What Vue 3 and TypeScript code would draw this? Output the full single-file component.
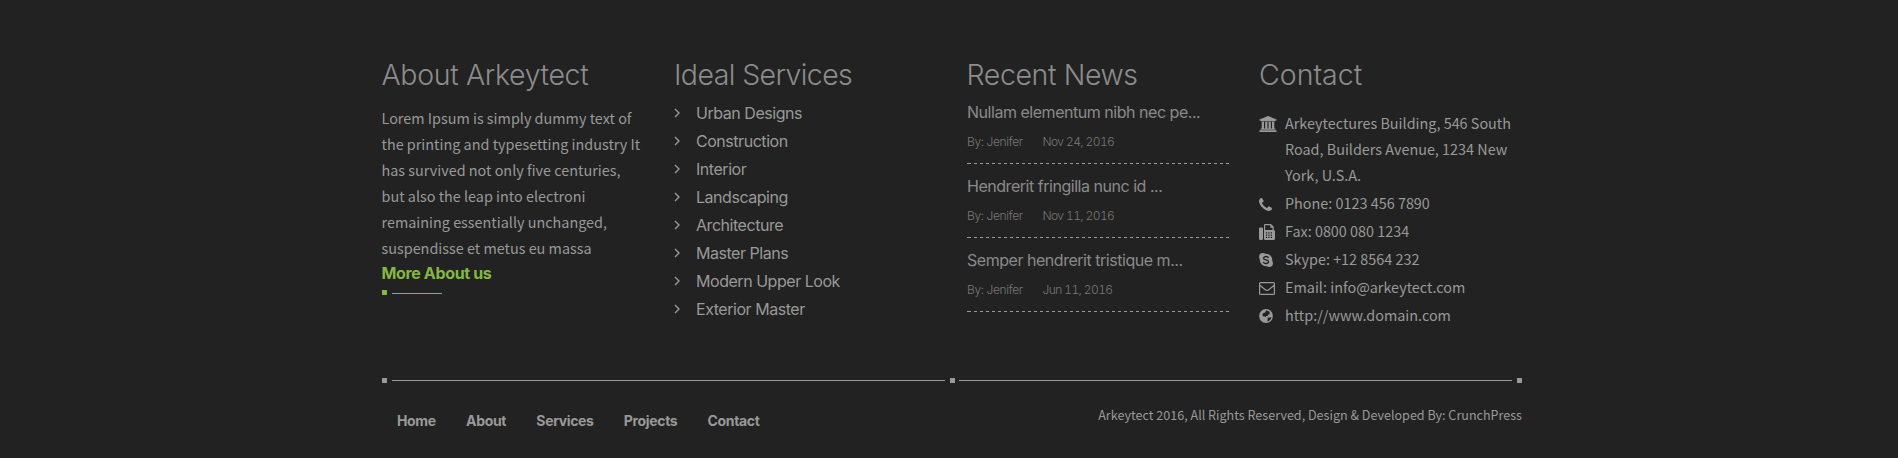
<script setup lang="ts">
interface NewsItem { title: string; author: string; date: string }
interface ContactRow { icon: string; text: string }

const services: string[] = [
  'Urban Designs', 'Construction', 'Interior', 'Landscaping',
  'Architecture', 'Master Plans', 'Modern Upper Look', 'Exterior Master',
]
const news: NewsItem[] = [
  { title: 'Nullam elementum nibh nec pe...', author: 'By: Jenifer', date: 'Nov 24, 2016' },
  { title: 'Hendrerit fringilla nunc id ...', author: 'By: Jenifer', date: 'Nov 11, 2016' },
  { title: 'Semper hendrerit tristique m...', author: 'By: Jenifer', date: 'Jun 11, 2016' },
]
const contacts: ContactRow[] = [
  { icon: 'bank', text: 'Arkeytectures Building, 546 South Road, Builders Avenue, 1234 New York, U.S.A.' },
  { icon: 'phone', text: 'Phone: 0123 456 7890' },
  { icon: 'fax', text: 'Fax: 0800 080 1234' },
  { icon: 'skype', text: 'Skype: +12 8564 232' },
  { icon: 'mail', text: 'Email: info@arkeytect.com' },
  { icon: 'globe', text: 'http://www.domain.com' },
]
const links: string[] = ['Home', 'About', 'Services', 'Projects', 'Contact']
</script>

<template>
  <footer class="footer">
    <div class="columns">
      <section>
        <h3 class="h-about">About Arkeytect</h3>
        <p class="about">
          Lorem Ipsum is simply dummy text of<br />the printing and typesetting industry It<br />has survived not only five centuries,<br />but also the leap into electroni<br />remaining essentially unchanged,<br />suspendisse et metus eu massa
        </p>
        <a class="more">More About us</a>
        <div class="more-rule"><i></i><b></b></div>
      </section>

      <section>
        <h3 class="h-services">Ideal Services</h3>
        <ul class="services">
          <li v-for="s in services" :key="s">
            <svg class="angle" viewBox="0 0 6 10"><path d="M1 1l4 4-4 4" /></svg>
            <span>{{ s }}</span>
          </li>
        </ul>
      </section>

      <section>
        <h3 class="h-news">Recent News</h3>
        <article v-for="n in news" :key="n.title" class="news">
          <h4>{{ n.title }}</h4>
          <div class="meta"><span class="by">{{ n.author }}</span><span>{{ n.date }}</span></div>
          <div class="dashes"></div>
        </article>
      </section>

      <section>
        <h3 class="h-contact">Contact</h3>
        <ul class="contact">
          <li v-for="c in contacts" :key="c.icon">
            <span class="icon">
              <svg v-if="c.icon === 'bank'" width="18" height="16" viewBox="0 0 1920 1792"><path d="M960 0l960 384v128h-128q0 26-20.500 45t-48.500 19h-1526q-28 0-48.500-19t-20.500-45h-128v-128zM256 640h256v768h128v-768h256v768h128v-768h256v768h128v-768h256v768h59q28 0 48.500 19t20.500 45v64h-1664v-64q0-26 20.500-45t48.500-19h59v-768zM1851 1600q28 0 48.500 19t20.500 45v128h-1920v-128q0-26 20.500-45t48.500-19h1782z" /></svg>
              <svg v-else-if="c.icon === 'phone'" width="13" height="13" viewBox="0 128 1408 1408"><path d="M1408 1240q0 27-10 70.500t-21 68.500q-21 50-122 106-94 51-186 51-27 0-52.500-3.500t-57.500-12.500-47.500-14.500-55.500-20.500-49-18q-98-35-175-83-128-79-264.500-215.500t-215.500-264.500q-48-77-83-175-3-9-18-49t-20.500-55.500-14.500-47.500-12.500-57.500-3.500-52.500q0-92 51-186 56-101 106-122 25-11 68.500-21t70.500-10q14 0 21 3 18 6 53 76 11 19 30 54t35 63.500 31 53.500q3 4 17.500 25t21.500 35.500 7 28.500q0 20-28.500 50t-62 55-62 53-28.500 46q0 9 5 22.500t8.500 20.500 14 24 11.500 19q76 137 174 235t235 174q2 1 19 11.500t24 14 20.500 8.500 22.500 5q18 0 46-28.500t53-62 55-62 50-28.500q14 0 28.500 7t35.500 21.500 25 17.500q25 15 53.500 31t63.500 35 54 30q70 35 76 53 3 7 3 21z" /></svg>
              <svg v-else-if="c.icon === 'fax'" width="16" height="16" viewBox="0 0 16 16"><path fill-rule="evenodd" d="M1.300 3.500h1.400Q4 3.500 4 4.800v9.900Q4 16 2.700 16H1.300Q0 16 0 14.700V4.800Q0 3.500 1.300 3.500zM5 1Q5 0 6 0h6l2.800 2.800V6q1.200.3 1.200 1.600v6.900q0 1.500-1.500 1.500H6.200Q5 16 5 14.800zM6.200 1.200V6h7.300V3.700h-2.200V1.200zM6.900 8.300v1.200h1.300V8.300zM9.300 8.300v1.200h1.300V8.300zM11.700 8.300v1.200H13V8.300zM6.900 10.500v1.200h1.300v-1.200zM9.300 10.500v1.200h1.300v-1.200zM11.700 10.500v1.200H13v-1.200zM6.900 12.700v1.200h1.300v-1.200zM9.300 12.700v1.200h1.300v-1.200zM11.700 12.700v1.200H13v-1.200z" /></svg>
              <svg v-else-if="c.icon === 'skype'" width="14" height="14" viewBox="0 0 14 14"><circle cx="7" cy="7" r="6.200" /><circle cx="3.800" cy="3.800" r="3.700" /><circle cx="10.200" cy="10.200" r="3.700" /><path class="cut" d="M9.600 4.900Q9 3.500 7 3.500T4.500 5.100Q4.500 6.500 7 6.900T9.600 8.800Q9.500 10.500 7.100 10.500 4.900 10.500 4.300 8.900" /></svg>
              <svg v-else-if="c.icon === 'mail'" width="16" height="13" viewBox="0 0 16 13"><path class="line" d="M1.600.6h12.800q1 0 1 1v9.800q0 1-1 1H1.600q-1 0-1-1V1.600q0-1 1-1zM.8 3.300Q3 5.100 5.700 7.300 7.100 8.500 8 8.500t2.300-1.200Q13 5.100 15.200 3.300" /></svg>
              <svg v-else width="14" height="14" viewBox="0 0 14 14"><circle cx="7" cy="7" r="6.900" /><path class="hole" d="M7.200 1.600l2 .3 1.700 1.200-.8.9.9.9-1.500.5-.7 1.400-2 .5.4 1.300-1.400-1-1.800-.4-.7-1.700L4.500 4l1.700-.6zM8.500 8.400l2.600.2 1.400-.6-1 2.500-2.600 2-.7-1.400.8-1.200z" /></svg>
            </span>
            <span>{{ c.text }}</span>
          </li>
        </ul>
      </section>
    </div>

    <div class="divider"><i></i><b></b><i></i><b class="second"></b><i></i></div>

    <div class="bottom">
      <nav><a v-for="l in links" :key="l">{{ l }}</a></nav>
      <p class="copy">Arkeytect 2016, All Rights Reserved, Design &amp; Developed By: CrunchPress</p>
    </div>
  </footer>
</template>

<style>
body { margin: 0; background: #222; }
</style>

<style scoped>
.footer {
  box-sizing: border-box;
  height: 458px;
  padding: 54px 376px 0 382px;
  background: #222;
  color: #999;
  font-family: Inter, sans-serif;
  overflow: hidden;
}
h3, h4, p, ul { margin: 0; padding: 0; list-style: none; }
.columns { display: grid; grid-template-columns: repeat(4, 262.5px); gap: 30px; height: 324px; }
h3 { height: 39px; padding-top: 1px; margin-left: -0.5px; line-height: 40px; font-size: 28.5px; font-weight: 300; color: #8c8c8c; white-space: nowrap; }
.h-about { letter-spacing: -0.35px; }
.h-services { letter-spacing: -0.6px; }
.h-news { letter-spacing: -0.4px; }
.h-contact { letter-spacing: 0; }
.about, .contact, .copy { font-family: "Noto Sans CJK SC", sans-serif; font-size: 14.4px; line-height: 26px; }
.about { margin: 11px 0 0 -0.5px; white-space: nowrap; }
.more { display: block; height: 26px; line-height: 26px; margin: -1px 0 0 -0.5px; font-size: 16px; font-weight: 650; letter-spacing: -0.36px; color: #83b941; }
.more-rule { display: flex; align-items: center; gap: 5px; height: 5px; margin-top: 4px; }
.more-rule i { width: 5px; height: 5px; background: #83b941; }
.more-rule b { width: 50px; height: 1px; margin-top: 2px; background: #83b941; }
.services { margin: 5px 0 0 -1px; }
.services li { display: flex; align-items: center; height: 28px; font-size: 16px; letter-spacing: -0.46px; }
.angle { width: 6px; height: 10px; margin-right: 16.5px; fill: none; stroke: #999; stroke-width: 1.4; }
.news { margin-bottom: 10px; }
h3 + .news { margin-top: 6px; }
h4 { height: 24px; line-height: 24px; font-size: 16px; font-weight: 400; letter-spacing: -0.47px; color: #8a8a8a; }
.meta { display: flex; height: 20px; margin-top: 8px; padding-bottom: 11px; line-height: 20px; font-size: 12px; font-weight: 300; letter-spacing: -0.6px; font-variant-numeric: tabular-nums; color: #777; }
.by { width: 75.5px; letter-spacing: -0.35px; }
.dashes { width: 262px; height: 1px; background: linear-gradient(90deg, #999 50%, transparent 50%) 1px 0 / 6px 1px repeat-x, linear-gradient(#999, #999) 0 0 / 1px 1px no-repeat; }
.contact { display: flex; flex-direction: column; gap: 2px; margin: 16px 0 0 -0.5px; }
.contact li { display: flex; height: 26px; }
.contact li:first-child { height: 78px; }
.icon { display: flex; align-items: center; flex: none; width: 26px; height: 28px; }
.icon svg { fill: #999; }
.icon .line { fill: none; stroke: #999; stroke-width: 1.2; }
.icon .cut { fill: none; stroke: #222; stroke-width: 1.3; }
.icon .hole { fill: #222; }
.divider { display: flex; align-items: center; height: 5px; gap: 5px; }
.divider i { width: 5px; height: 5px; background: #999; }
.divider b { flex: 1; height: 1px; background: #999; }
.divider .second { margin-left: -1px; }
.bottom { display: flex; justify-content: space-between; }
nav { display: flex; gap: 30.3px; padding: 25px 0 0 15px; line-height: 26px; font-size: 14px; font-weight: 650; letter-spacing: -0.35px; }
.copy { margin-top: 19px; font-size: 12.57px; white-space: nowrap; }
</style>
